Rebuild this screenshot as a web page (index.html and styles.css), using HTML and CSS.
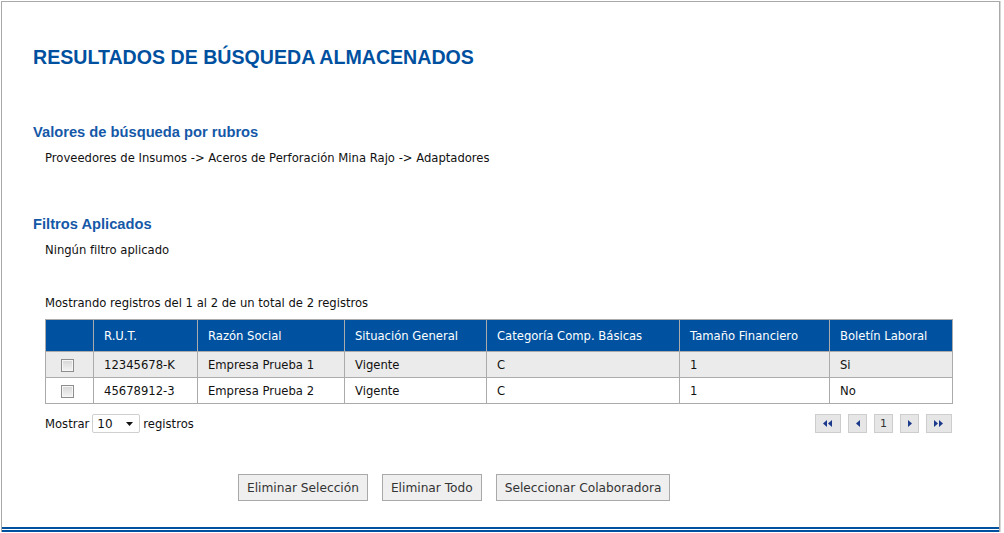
FILE: index.html
```html
<!DOCTYPE html>
<html lang="es">
<head>
    <meta charset="UTF-8">
    <title>Resultados de búsqueda almacenados</title>
    <link rel="stylesheet" href="styles.css">
</head>
<body>
    <div class="frame">
        <div class="content">
            <h1 class="title">RESULTADOS DE BÚSQUEDA ALMACENADOS</h1>

            <!-- Rubros -->
            <h2 class="section-title rubros">Valores de búsqueda por rubros</h2>
            <p class="section-text">Proveedores de Insumos -&gt; Aceros de Perforación Mina Rajo -&gt; Adaptadores</p>

            <!-- Filtros -->
            <h2 class="section-title filtros">Filtros Aplicados</h2>
            <p class="section-text">Ningún filtro aplicado</p>

            <!-- Resultados -->
            <div class="results">
                <p class="info">Mostrando registros del 1 al 2 de un total de 2 registros</p>
                <table class="grid">
                    <colgroup>
                        <col class="col-check">
                        <col class="col-rut">
                        <col class="col-razon">
                        <col class="col-sit">
                        <col class="col-cat">
                        <col class="col-tam">
                        <col class="col-bol">
                    </colgroup>
                    <thead>
                        <tr>
                            <th></th>
                            <th>R.U.T.</th>
                            <th>Razón Social</th>
                            <th>Situación General</th>
                            <th>Categoría Comp. Básicas</th>
                            <th>Tamaño Financiero</th>
                            <th>Boletín Laboral</th>
                        </tr>
                    </thead>
                    <tbody>
                        <tr class="odd">
                            <td class="check"><input type="checkbox" class="chk"></td>
                            <td>12345678-K</td>
                            <td>Empresa Prueba 1</td>
                            <td>Vigente</td>
                            <td>C</td>
                            <td>1</td>
                            <td>Si</td>
                        </tr>
                        <tr>
                            <td class="check"><input type="checkbox" class="chk"></td>
                            <td>45678912-3</td>
                            <td>Empresa Prueba 2</td>
                            <td>Vigente</td>
                            <td>C</td>
                            <td>1</td>
                            <td>No</td>
                        </tr>
                    </tbody>
                </table>

                <div class="grid-footer">
                    <div class="length">
                        <span>Mostrar</span>
                        <span class="select">10
                            <svg class="caret" width="7" height="4" viewBox="0 0 7 4"><polygon points="0,0 7,0 3.5,4" fill="#111"/></svg>
                        </span>
                        <span>registros</span>
                    </div>
                    <div class="paging">
                        <span class="page-btn wide">
                            <svg width="10" height="7" viewBox="0 0 10 7"><polygon points="4,0 4,7 0,3.5" fill="#1c3a8c"/><polygon points="9,0 9,7 5,3.5" fill="#1c3a8c"/></svg>
                        </span>
                        <span class="page-btn">
                            <svg width="4" height="7" viewBox="0 0 4 7"><polygon points="4,0 4,7 0,3.5" fill="#1c3a8c"/></svg>
                        </span>
                        <span class="page-btn num">1</span>
                        <span class="page-btn">
                            <svg width="4" height="7" viewBox="0 0 4 7"><polygon points="0,0 0,7 4,3.5" fill="#1c3a8c"/></svg>
                        </span>
                        <span class="page-btn wide">
                            <svg width="10" height="7" viewBox="0 0 10 7"><polygon points="0,0 0,7 4,3.5" fill="#1c3a8c"/><polygon points="5,0 5,7 9,3.5" fill="#1c3a8c"/></svg>
                        </span>
                    </div>
                </div>
            </div>

            <div class="actions">
                <button class="btn">Eliminar Selección</button>
                <button class="btn">Eliminar Todo</button>
                <button class="btn">Seleccionar Colaboradora</button>
            </div>
        </div>
        <div class="footer-line"></div>
    </div>
</body>
</html>
```

FILE: styles.css
```css
body {
    margin: 0;
    font-family: "DejaVu Sans", Verdana, sans-serif;
    font-size: 11.6px;
    color: #111;
    background-color: #fff;
}
.frame {
    margin: 1px 0 0 1px;
    width: 999px;
    border: 1px solid #a9a9a9;
    border-bottom: none;
    box-shadow: 1px 0 0 #d8d8d8;
    box-sizing: border-box;
}
.content {
    padding: 43px 37px 0 31px;
}
.title {
    margin: 0;
    font-family: "Liberation Sans", Arial, sans-serif;
    font-size: 19.6px;
    line-height: 24px;
    font-weight: bold;
    color: #0050a0;
}
.section-title {
    margin: 0;
    font-family: "Liberation Sans", Arial, sans-serif;
    font-size: 14.7px;
    line-height: 17px;
    font-weight: bold;
    color: #1558a8;
}
.rubros {
    margin-top: 55px;
}
.filtros {
    margin-top: 51px;
}
.section-text {
    margin: 10px 0 0 12px;
    line-height: 14px;
}
.results {
    margin: 39px 0 0 12px;
}
.info {
    margin: 0 0 9px 0;
    line-height: 14px;
}
/* Tabla de resultados */
.grid {
    width: 907px;
    border-collapse: collapse;
    table-layout: fixed;
}
.col-check { width: 48px; }
.col-rut { width: 104px; }
.col-razon { width: 147px; }
.col-sit { width: 142px; }
.col-cat { width: 193px; }
.col-tam { width: 150px; }
.col-bol { width: 123px; }
.grid th, .grid td {
    border: 1px solid #ababab;
    padding: 0 10px;
    text-align: left;
    font-weight: normal;
    white-space: nowrap;
    overflow: hidden;
}
.grid th {
    height: 31px;
    background-color: #0052a0;
    color: #fff;
}
.grid td {
    height: 25px;
    background-color: #fff;
}
.grid tr.odd td {
    background-color: #ebebeb;
}
.grid td.check {
    padding: 0;
    text-align: center;
}
.chk {
    appearance: none;
    -webkit-appearance: none;
    width: 13px;
    height: 13px;
    margin: 2px 4px 0 0;
    border: 1px solid #8e8e8e;
    background: linear-gradient(#d6d6d6, #f4f4f4);
    box-shadow: inset 0 0 0 1px #f6f6f6;
    vertical-align: middle;
}
.grid-footer {
    display: flex;
    justify-content: space-between;
    margin-top: 10px;
    width: 907px;
}
.length {
    display: flex;
    align-items: center;
    gap: 3px;
    line-height: 14px;
}
.select {
    display: inline-flex;
    align-items: center;
    justify-content: space-between;
    width: 48px;
    height: 19px;
    box-sizing: border-box;
    padding: 0 6px 0 4px;
    border: 1px solid #cfcfcf;
    border-radius: 2px;
    font-size: 12px;
}
.paging {
    display: flex;
    gap: 7px;
}
.page-btn {
    display: inline-flex;
    align-items: center;
    justify-content: center;
    width: 19px;
    height: 19px;
    box-sizing: border-box;
    background-color: #e6e6e6;
    border: 1px solid #cdcdcd;
    color: #333;
}
.page-btn.wide {
    width: 26px;
}
.page-btn.num {
    font-size: 11px;
}
.actions {
    display: flex;
    gap: 14px;
    margin: 41px 0 0 205px;
}
.btn {
    height: 27px;
    padding: 0 8px;
    font-family: "DejaVu Sans", Verdana, sans-serif;
    font-size: 12.2px;
    color: #333;
    background-color: #efefef;
    border: 1px solid #a9a9a9;
    cursor: pointer;
}
.footer-line {
    margin-top: 26px;
    height: 1px;
    border-top: 2px solid #0050a0;
    border-bottom: 2px solid #0050a0;
}
```
